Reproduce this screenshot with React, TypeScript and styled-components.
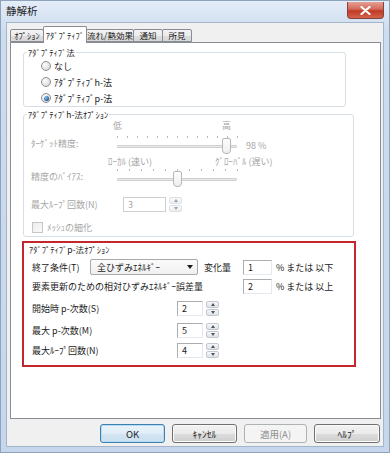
import React from "react";
import styled, { createGlobalStyle } from "styled-components";

const GlobalStyle = createGlobalStyle`
  html, body {
    margin: 0;
    padding: 0;
    background: #ffffff;
  }
  * {
    box-sizing: border-box;
  }
`;

const UI_FONT = `"Noto Sans CJK JP", "Noto Sans", sans-serif`;
const DISABLED = "#a6a6a6";

function App() {
  return (
    <>
      <GlobalStyle />
      <Window>
        <TitleBar>
          <Title>静解析</Title>
          <CloseButton>
            <svg width="11" height="9" viewBox="0 0 11 9">
              <path d="M1.5 1 L9.5 8 M9.5 1 L1.5 8" stroke="#ffffff" strokeWidth="2.2" strokeLinecap="round" />
            </svg>
          </CloseButton>
        </TitleBar>

        <Client>
          <TabStrip>
            <Tab $w={34}>ｵﾌﾟｼｮﾝ</Tab>
            <Tab $w={44} $active>ｱﾀﾞﾌﾟﾃｨﾌﾞ</Tab>
            <Tab $w={48}>流れ/熱効果</Tab>
            <Tab $w={30}>通知</Tab>
            <Tab $w={30}>所見</Tab>
          </TabStrip>

          <Panel>
            <Group $w={323} $mt={4} $ml={12}>
              <Legend>ｱﾀﾞﾌﾟﾃｨﾌﾞ法</Legend>
              <RadioList>
                <RadioRow>
                  <Radio />
                  <span>なし</span>
                </RadioRow>
                <RadioRow>
                  <Radio />
                  <span>ｱﾀﾞﾌﾟﾃｨﾌﾞh-法</span>
                </RadioRow>
                <RadioRow>
                  <Radio $checked />
                  <span>ｱﾀﾞﾌﾟﾃｨﾌﾞp-法</span>
                </RadioRow>
              </RadioList>
            </Group>

            <Group $w={331} $mt={2} $ml={12}>
              <Legend>ｱﾀﾞﾌﾟﾃｨﾌﾞh-法ｵﾌﾟｼｮﾝ</Legend>
              <DisabledBody>
                <ScaleRow $pad={82}>
                  <ScaleLabel $w={109}>低</ScaleLabel>
                  <ScaleLabel>高</ScaleLabel>
                </ScaleRow>
                <SliderRow $mt={3}>
                  <SliderLabel>ﾀｰｹﾞｯﾄ精度:</SliderLabel>
                  <Slider>
                    <Ticks $step={10} />
                    <Track />
                    <Thumb $pos={105} />
                  </Slider>
                  <SliderValue>98 %</SliderValue>
                </SliderRow>
                <ScaleRow $pad={77}>
                  <ScaleLabel $w={107}>ﾛｰｶﾙ (速い)</ScaleLabel>
                  <ScaleLabel>ｸﾞﾛｰﾊﾞﾙ (遅い)</ScaleLabel>
                </ScaleRow>
                <SliderRow $mt={0}>
                  <SliderLabel>精度のﾊﾞｲｱｽ:</SliderLabel>
                  <Slider>
                    <Ticks $step={12} />
                    <Track />
                    <Thumb $pos={56} />
                  </Slider>
                </SliderRow>
                <FieldRow $mt={7}>
                  <FieldLabel $w={92}>最大ﾙｰﾌﾟ回数(N)</FieldLabel>
                  <TextBox $w={43} $disabled>
                    3
                  </TextBox>
                  <Spin $disabled />
                </FieldRow>
                <CheckRow>
                  <CheckBox />
                  <span>ﾒｯｼｭの細化</span>
                </CheckRow>
              </DisabledBody>
            </Group>

            <Highlight>
              <HighlightTitle>ｱﾀﾞﾌﾟﾃｨﾌﾞp-法ｵﾌﾟｼｮﾝ</HighlightTitle>
              <FieldRow $mt={5}>
                <FieldLabel $w={58}>終了条件(T)</FieldLabel>
                <Select>
                  <span>全ひずみｴﾈﾙｷﾞｰ</span>
                  <SelectArrow />
                </Select>
                <FieldLabel $w={39} $ml={6}>
                  変化量
                </FieldLabel>
                <TextBox $w={29}>1</TextBox>
                <Unit>% または 以下</Unit>
              </FieldRow>
              <FieldRow $mt={3}>
                <FieldLabel $w={211}>要素更新のための相対ひずみｴﾈﾙｷﾞｰ誤差量</FieldLabel>
                <TextBox $w={29}>2</TextBox>
                <Unit>% または 以上</Unit>
              </FieldRow>
              <FieldRow $mt={6}>
                <FieldLabel $w={145}>開始時 p-次数(S)</FieldLabel>
                <TextBox $w={26}>2</TextBox>
                <Spin />
              </FieldRow>
              <FieldRow $mt={6}>
                <FieldLabel $w={145}>最大 p-次数(M)</FieldLabel>
                <TextBox $w={26}>5</TextBox>
                <Spin />
              </FieldRow>
              <FieldRow $mt={4}>
                <FieldLabel $w={145}>最大ﾙｰﾌﾟ回数(N)</FieldLabel>
                <TextBox $w={26}>4</TextBox>
                <Spin />
              </FieldRow>
            </Highlight>
          </Panel>

          <ButtonRow>
            <DialogButton $w={65} $default>
              OK
            </DialogButton>
            <DialogButton $w={65}>ｷｬﾝｾﾙ</DialogButton>
            <DialogButton $w={63} disabled>
              適用(A)
            </DialogButton>
            <DialogButton $w={66}>ﾍﾙﾌﾟ</DialogButton>
          </ButtonRow>
        </Client>
      </Window>
    </>
  );
}

function Spin(props: { $disabled?: boolean }) {
  return (
    <SpinBox $disabled={props.$disabled}>
      <SpinHalf>
        <SpinArrow $up />
      </SpinHalf>
      <SpinHalf>
        <SpinArrow />
      </SpinHalf>
    </SpinBox>
  );
}

export default App;

const Window = styled.div`
  width: 390px;
  height: 453px;
  display: flex;
  flex-direction: column;
  padding: 0 5px 5px 5px;
  border: 1px solid #8ea2bb;
  background: linear-gradient(#e4edf8, #cddcef 30px, #c6d6ec);
  font-family: ${UI_FONT};
  font-size: 9px;
  color: #1b1b1b;
`;

const TitleBar = styled.div`
  height: 21px;
  display: flex;
  justify-content: space-between;
  align-items: flex-start;
`;

const Title = styled.div`
  line-height: 20px;
  font-size: 10.5px;
  color: #1e1e1e;
`;

const CloseButton = styled.div`
  width: 37px;
  height: 17px;
  margin-top: 1px;
  display: flex;
  justify-content: center;
  align-items: center;
  border: 1px solid #86413a;
  border-top: none;
  border-radius: 0 0 4px 4px;
  background: linear-gradient(#e4a093, #d2695a 45%, #c23a25 55%, #d0634c);
`;

const Client = styled.div`
  flex: 1;
  display: flex;
  flex-direction: column;
  padding: 4px 2px 3px 3px;
  border: 1px solid #a4b4c9;
  background: #f0f0f0;
`;

const TabStrip = styled.div`
  height: 16px;
  display: flex;
  align-items: flex-end;
  margin-bottom: -1px;
  position: relative;
  z-index: 1;
`;

const Tab = styled.div<{ $w: number; $active?: boolean }>`
  width: ${(p) => p.$w}px;
  height: ${(p) => (p.$active ? 17 : 13)}px;
  margin-bottom: ${(p) => (p.$active ? 0 : 1)}px;
  display: flex;
  justify-content: center;
  align-items: center;
  border: 1px solid #898c95;
  border-bottom: ${(p) => (p.$active ? "none" : "1px solid #898c95")};
  border-radius: 2px 2px 0 0;
  background: ${(p) => (p.$active ? "#ffffff" : "linear-gradient(#f3f3f3, #ebebeb 50%, #dddddd 51%, #d8d8d8)")};
  font-size: 8.5px;
  line-height: 1;
  color: #1b1b1b;
  & + & {
    margin-left: -1px;
  }
`;

const Panel = styled.div`
  flex: 1;
  display: flex;
  flex-direction: column;
  border: 1px solid #898c95;
  background: #ffffff;
`;

const Group = styled.fieldset<{ $w: number; $mt: number; $ml: number }>`
  width: ${(p) => p.$w}px;
  margin: ${(p) => p.$mt}px 0 0 ${(p) => p.$ml}px;
  padding: 0;
  min-width: 0;
  border: 1px solid #d5dfe5;
  border-radius: 3px;
`;

const Legend = styled.legend`
  margin-left: 3px;
  padding: 0 1px;
  line-height: 10px;
  font-size: 8.5px;
  color: #1b1b1b;
`;

const RadioList = styled.div`
  display: flex;
  flex-direction: column;
  padding: 1px 0 0 17px;
`;

const RadioRow = styled.div`
  height: 16px;
  display: flex;
  align-items: center;
  gap: 3px;
  color: #1b1b1b;
`;

const Radio = styled.span<{ $checked?: boolean }>`
  width: 10px;
  height: 10px;
  display: flex;
  justify-content: center;
  align-items: center;
  border: 1px solid #8e8f8f;
  border-radius: 50%;
  background: radial-gradient(circle at 35% 35%, #ffffff, #e2e2e2 60%, #cfcfcf);
  &::after {
    content: "";
    display: ${(p) => (p.$checked ? "block" : "none")};
    width: 5px;
    height: 5px;
    border-radius: 50%;
    background: radial-gradient(circle at 35% 35%, #8fc2f0, #1f5c9c 70%, #143d68);
  }
`;

const DisabledBody = styled.div`
  display: flex;
  flex-direction: column;
  padding: 1px 0 3px 7px;
  color: ${DISABLED};
`;

const ScaleRow = styled.div<{ $pad: number }>`
  height: 11px;
  display: flex;
  align-items: center;
  padding-left: ${(p) => p.$pad}px;
`;

const ScaleLabel = styled.span<{ $w?: number }>`
  width: ${(p) => (p.$w ? `${p.$w}px` : "auto")};
  flex-shrink: 0;
  white-space: nowrap;
`;

const SliderRow = styled.div<{ $mt: number }>`
  height: 22px;
  margin-top: ${(p) => p.$mt}px;
  display: flex;
  align-items: flex-start;
`;

const SliderLabel = styled.span`
  width: 86px;
  padding-top: 5px;
  line-height: 10px;
  white-space: nowrap;
`;

const Slider = styled.div`
  width: 121px;
  height: 22px;
  position: relative;
`;

const Ticks = styled.div<{ $step: number }>`
  position: absolute;
  top: 2px;
  left: 0;
  width: 121px;
  height: 2px;
  background-image: repeating-linear-gradient(
    to right,
    #b9b9b9 0 1px,
    transparent 1px ${(p) => p.$step}px
  );
`;

const Track = styled.div`
  position: absolute;
  top: 11px;
  left: 0;
  width: 120px;
  height: 3px;
  border: 1px solid #d0d0d0;
  border-radius: 1px;
  background: #e9e9e9;
`;

const Thumb = styled.div<{ $pos: number }>`
  position: absolute;
  top: 4px;
  left: ${(p) => p.$pos}px;
  width: 9px;
  height: 16px;
  border: 1px solid #b7b7b7;
  border-radius: 2px 2px 4px 4px;
  background: linear-gradient(#fdfdfd, #efefef);
`;

const SliderValue = styled.span`
  margin-left: 8px;
  padding-top: 7px;
  line-height: 10px;
  white-space: nowrap;
`;

const FieldRow = styled.div<{ $mt: number }>`
  height: 16px;
  margin-top: ${(p) => p.$mt}px;
  display: flex;
  align-items: center;
`;

const FieldLabel = styled.span<{ $w: number; $ml?: number }>`
  width: ${(p) => p.$w}px;
  margin-left: ${(p) => p.$ml ?? 0}px;
  flex-shrink: 0;
  white-space: nowrap;
`;

const TextBox = styled.div<{ $w: number; $disabled?: boolean }>`
  width: ${(p) => p.$w}px;
  height: 15px;
  display: flex;
  align-items: center;
  padding-left: 4px;
  border: 1px solid;
  border-color: ${(p) => (p.$disabled ? "#cfcfcf" : "#abadb3 #e3e9ef #e3e9ef #abadb3")};
  background: #ffffff;
  color: ${(p) => (p.$disabled ? DISABLED : "#1b1b1b")};
`;

const SpinBox = styled.div<{ $disabled?: boolean }>`
  width: 13px;
  height: 15px;
  margin-left: 3px;
  display: flex;
  flex-direction: column;
  gap: 1px;
  opacity: ${(p) => (p.$disabled ? 0.55 : 1)};
`;

const SpinHalf = styled.div`
  flex: 1;
  display: flex;
  justify-content: center;
  align-items: center;
  border: 1px solid #c3c8cf;
  border-radius: 2px;
  background: linear-gradient(#f6f7f9, #dfe3e8);
`;

const SpinArrow = styled.span<{ $up?: boolean }>`
  width: 0;
  height: 0;
  border-left: 2.5px solid transparent;
  border-right: 2.5px solid transparent;
  border-bottom: ${(p) => (p.$up ? "3px solid #4d5560" : "none")};
  border-top: ${(p) => (p.$up ? "none" : "3px solid #4d5560")};
`;

const CheckRow = styled.div`
  height: 11px;
  margin-top: 10px;
  padding-left: 1px;
  display: flex;
  align-items: center;
  gap: 4px;
`;

const CheckBox = styled.span`
  width: 11px;
  height: 11px;
  border: 1px solid #c6c6c6;
  background: linear-gradient(135deg, #ececec, #fafafa);
`;

const Highlight = styled.div`
  width: 334px;
  margin: 4px 0 0 11px;
  padding: 1px 0 7px 8px;
  display: flex;
  flex-direction: column;
  border: 2px solid #c4262e;
`;

const HighlightTitle = styled.div`
  margin-left: -3px;
  line-height: 10px;
  font-size: 8.5px;
`;

const Select = styled.div`
  width: 108px;
  height: 16px;
  display: flex;
  justify-content: space-between;
  align-items: center;
  padding: 0 4px 0 6px;
  border: 1px solid #a9a9a9;
  border-radius: 2px;
  background: linear-gradient(#fbfbfb, #f0f0f0);
`;

const SelectArrow = styled.span`
  width: 0;
  height: 0;
  border-left: 3.5px solid transparent;
  border-right: 3.5px solid transparent;
  border-top: 4px solid #1b1b1b;
`;

const Unit = styled.span`
  margin-left: 4px;
  white-space: nowrap;
`;

const ButtonRow = styled.div`
  display: flex;
  justify-content: flex-end;
  gap: 7px;
  margin-top: 5px;
  padding-right: 1px;
`;

const DialogButton = styled.button<{ $w: number; $default?: boolean }>`
  width: ${(p) => p.$w}px;
  height: 19px;
  padding: 0;
  border: 1px solid ${(p) => (p.$default ? "#3c7fb1" : "#707070")};
  border-radius: 3px;
  background: ${(p) =>
    p.$default
      ? "linear-gradient(#eaf3fa, #e0edf7 50%, #d3e5f3 51%, #cbdfef)"
      : "linear-gradient(#f2f2f2, #ebebeb 50%, #dddddd 51%, #cfcfcf)"};
  box-shadow: ${(p) => (p.$default ? "inset 0 0 0 1px #b9dcf5" : "inset 0 0 0 1px #fbfbfb")};
  font-family: ${UI_FONT};
  font-size: 9.5px;
  color: #1b1b1b;
  &:disabled {
    border-color: #adb2b5;
    background: #f4f4f4;
    box-shadow: none;
    color: #8f8f8f;
  }
`;
